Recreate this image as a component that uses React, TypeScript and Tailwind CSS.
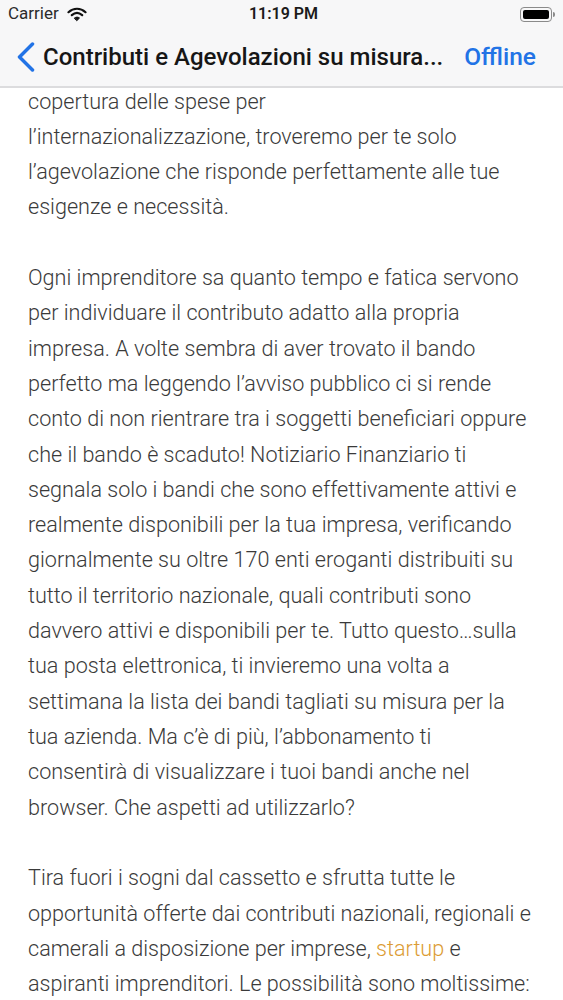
import React from "react";

const paragraphs: React.ReactNode[][] = [
  [
    "copertura delle spese per",
    "l’internazionalizzazione, troveremo per te solo",
    "l’agevolazione che risponde perfettamente alle tue",
    "esigenze e necessità.",
  ],
  [
    "Ogni imprenditore sa quanto tempo e fatica servono",
    "per individuare il contributo adatto alla propria",
    "impresa. A volte sembra di aver trovato il bando",
    "perfetto ma leggendo l’avviso pubblico ci si rende",
    "conto di non rientrare tra i soggetti beneficiari oppure",
    "che il bando è scaduto! Notiziario Finanziario ti",
    "segnala solo i bandi che sono effettivamente attivi e",
    "realmente disponibili per la tua impresa, verificando",
    "giornalmente su oltre 170 enti eroganti distribuiti su",
    "tutto il territorio nazionale, quali contributi sono",
    "davvero attivi e disponibili per te. Tutto questo…sulla",
    "tua posta elettronica, ti invieremo una volta a",
    "settimana la lista dei bandi tagliati su misura per la",
    "tua azienda. Ma c’è di più, l’abbonamento ti",
    "consentirà di visualizzare i tuoi bandi anche nel",
    "browser. Che aspetti ad utilizzarlo?",
  ],
  [
    "Tira fuori i sogni dal cassetto e sfrutta tutte le",
    "opportunità offerte dai contributi nazionali, regionali e",
    <>
      camerali a disposizione per imprese, <span className="text-[#dc9c34]">startup</span> e
    </>,
    "aspiranti imprenditori. Le possibilità sono moltissime:",
  ],
];

export default function App() {
  return (
    <div className="h-[1000px] w-[563px] overflow-hidden bg-white font-['Roboto',sans-serif]">
      <header className="h-[88px] border-b-2 border-[#dcdcde] bg-[#f7f7f8]">
        <div className="flex h-[28px] items-center justify-between pl-[8px] pr-[8px]">
          <div className="flex w-[150px] items-center gap-[8px] text-[17px] text-[#2b2b2b]">
            <span>Carrier</span>
            <svg width="20" height="15" viewBox="0 0 20 15" fill="none" stroke="#111" strokeLinecap="round">
              <path d="M1.500 5.200C6.500 .6 13.500 .6 18.500 5.200" strokeWidth="2.200" />
              <path d="M4.800 8.200C8 5.400 12 5.400 15.200 8.200" strokeWidth="2.200" />
              <path d="M7.500 11C9 9.800 11 9.800 12.500 11L10 13.500Z" fill="#111" strokeWidth="1" />
            </svg>
          </div>
          <span className="ml-[4px] text-[16px] font-semibold text-[#1b1b1b]">11:19 PM</span>
          <div className="flex w-[150px] items-center justify-end">
            <div className="h-[15px] w-[32px] rounded-[4px] border border-[#8a8a8a] p-[2px]">
              <div className="h-full w-full rounded-[2px] bg-black" />
            </div>
            <div className="ml-[1px] h-[5px] w-[1.500px] rounded-r bg-[#8a8a8a]" />
          </div>
        </div>
        <div className="flex h-[58px] items-center pl-[17px] pr-[27px]">
          <svg width="18" height="30" viewBox="0 0 18 30" fill="none" stroke="#2273e6" strokeWidth="3.500" strokeLinecap="round" strokeLinejoin="round">
            <path d="M15.500 2 2.500 15 15.500 28" />
          </svg>
          <span className="ml-[8px] flex-1 whitespace-nowrap text-[24px] font-medium text-[#161616]">
            Contributi e Agevolazioni su misura...
          </span>
          <span className="text-[24.500px] font-medium text-[#2273e6]">Offline</span>
        </div>
      </header>
      <main className="-mt-[4.500px] flex flex-col gap-[35.400px] pl-[28px] text-[21.600px] font-light leading-[35.300px] text-[#3a3a3a]">
        {paragraphs.map((lines, i) => (
          <p key={i}>
            {lines.map((line, j) => (
              <span key={j} className="block whitespace-nowrap">
                {line}
              </span>
            ))}
          </p>
        ))}
      </main>
    </div>
  );
}
